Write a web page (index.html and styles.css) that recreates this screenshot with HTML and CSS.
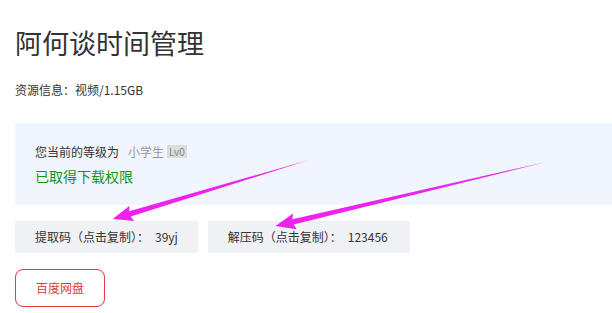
FILE: index.html
```html
<!DOCTYPE html>
<html lang="zh-CN">
<head>
<meta charset="utf-8">
<title>阿何谈时间管理</title>
<link rel="stylesheet" href="styles.css">
</head>
<body>
<div class="page">
  <h1 class="title">阿何谈时间管理</h1>
  <p class="info">资源信息：视频/1.15GB</p>
  <div class="level-box">
    <div class="level-line">您当前的等级为<span class="level-name">小学生</span><span class="badge">Lv0</span></div>
    <div class="granted">已取得下载权限</div>
  </div>
  <div class="codes">
    <div class="code">提取码（点击复制）：<span class="val">39yj</span></div>
    <div class="code code-wide">解压码（点击复制）：<span class="val">123456</span></div>
  </div>
  <a class="pan-btn">百度网盘</a>
  <svg class="arrows" width="612" height="313" viewBox="0 0 612 313">
    <g transform="translate(309,160) rotate(163.25)">
      <polygon points="0,0 187,-2.7 185,-8 205,0 185,8 187,2.7" fill="#ee22ee"/>
    </g>
    <g transform="translate(546,162) rotate(166.7)">
      <polygon points="0,0 260,-2.7 258,-8 278,0 258,8 260,2.7" fill="#ee22ee"/>
    </g>
  </svg>
</div>
</body>
</html>
```

FILE: styles.css
```css
* { box-sizing: border-box; }
html, body {
  margin: 0;
  padding: 0;
  background: #fff;
  font-family: "Noto Sans CJK SC", "Noto Sans", sans-serif;
  color: #333;
}
.page {
  position: relative;
  width: 612px;
  height: 313px;
  padding: 25px 0 0 15px;
  overflow: hidden;
}
.title {
  margin: 0;
  font-size: 27px;
  line-height: 36px;
  font-weight: 400;
  color: #333;
}
.info {
  margin: 19px 0 0;
  font-size: 12px;
  line-height: 20px;
  color: #333;
}
.level-box {
  margin-top: 23px;
  background: #f0f5fe;
  padding: 19px 20px;
  height: 82px;
}
.level-line {
  font-size: 12px;
  line-height: 20px;
  color: #333;
}
.level-name {
  color: #999;
  margin-left: 9px;
}
.badge {
  display: inline-block;
  margin-left: 3px;
  padding: 0 2px;
  background: #ddd;
  color: #888;
  font-size: 10px;
  line-height: 13px;
  vertical-align: 1px;
}
.granted {
  margin-top: 4px;
  font-size: 14px;
  line-height: 20px;
  color: #179417;
}
.codes {
  display: flex;
  gap: 10px;
  margin-top: 16px;
}
.code {
  height: 32px;
  line-height: 32px;
  padding: 0 20px;
  background: #f0f1f5;
  font-size: 12px;
  color: #333;
}
.code-wide {
  padding-right: 22px;
}
.val {
  margin-left: 6px;
}
.pan-btn {
  display: inline-block;
  margin-top: 16px;
  width: 90px;
  height: 38px;
  line-height: 36px;
  text-align: center;
  border: 1px solid #e4393c;
  border-radius: 8px;
  color: #e4393c;
  font-size: 12px;
}
.arrows {
  position: absolute;
  left: 0;
  top: 0;
  pointer-events: none;
}
```
